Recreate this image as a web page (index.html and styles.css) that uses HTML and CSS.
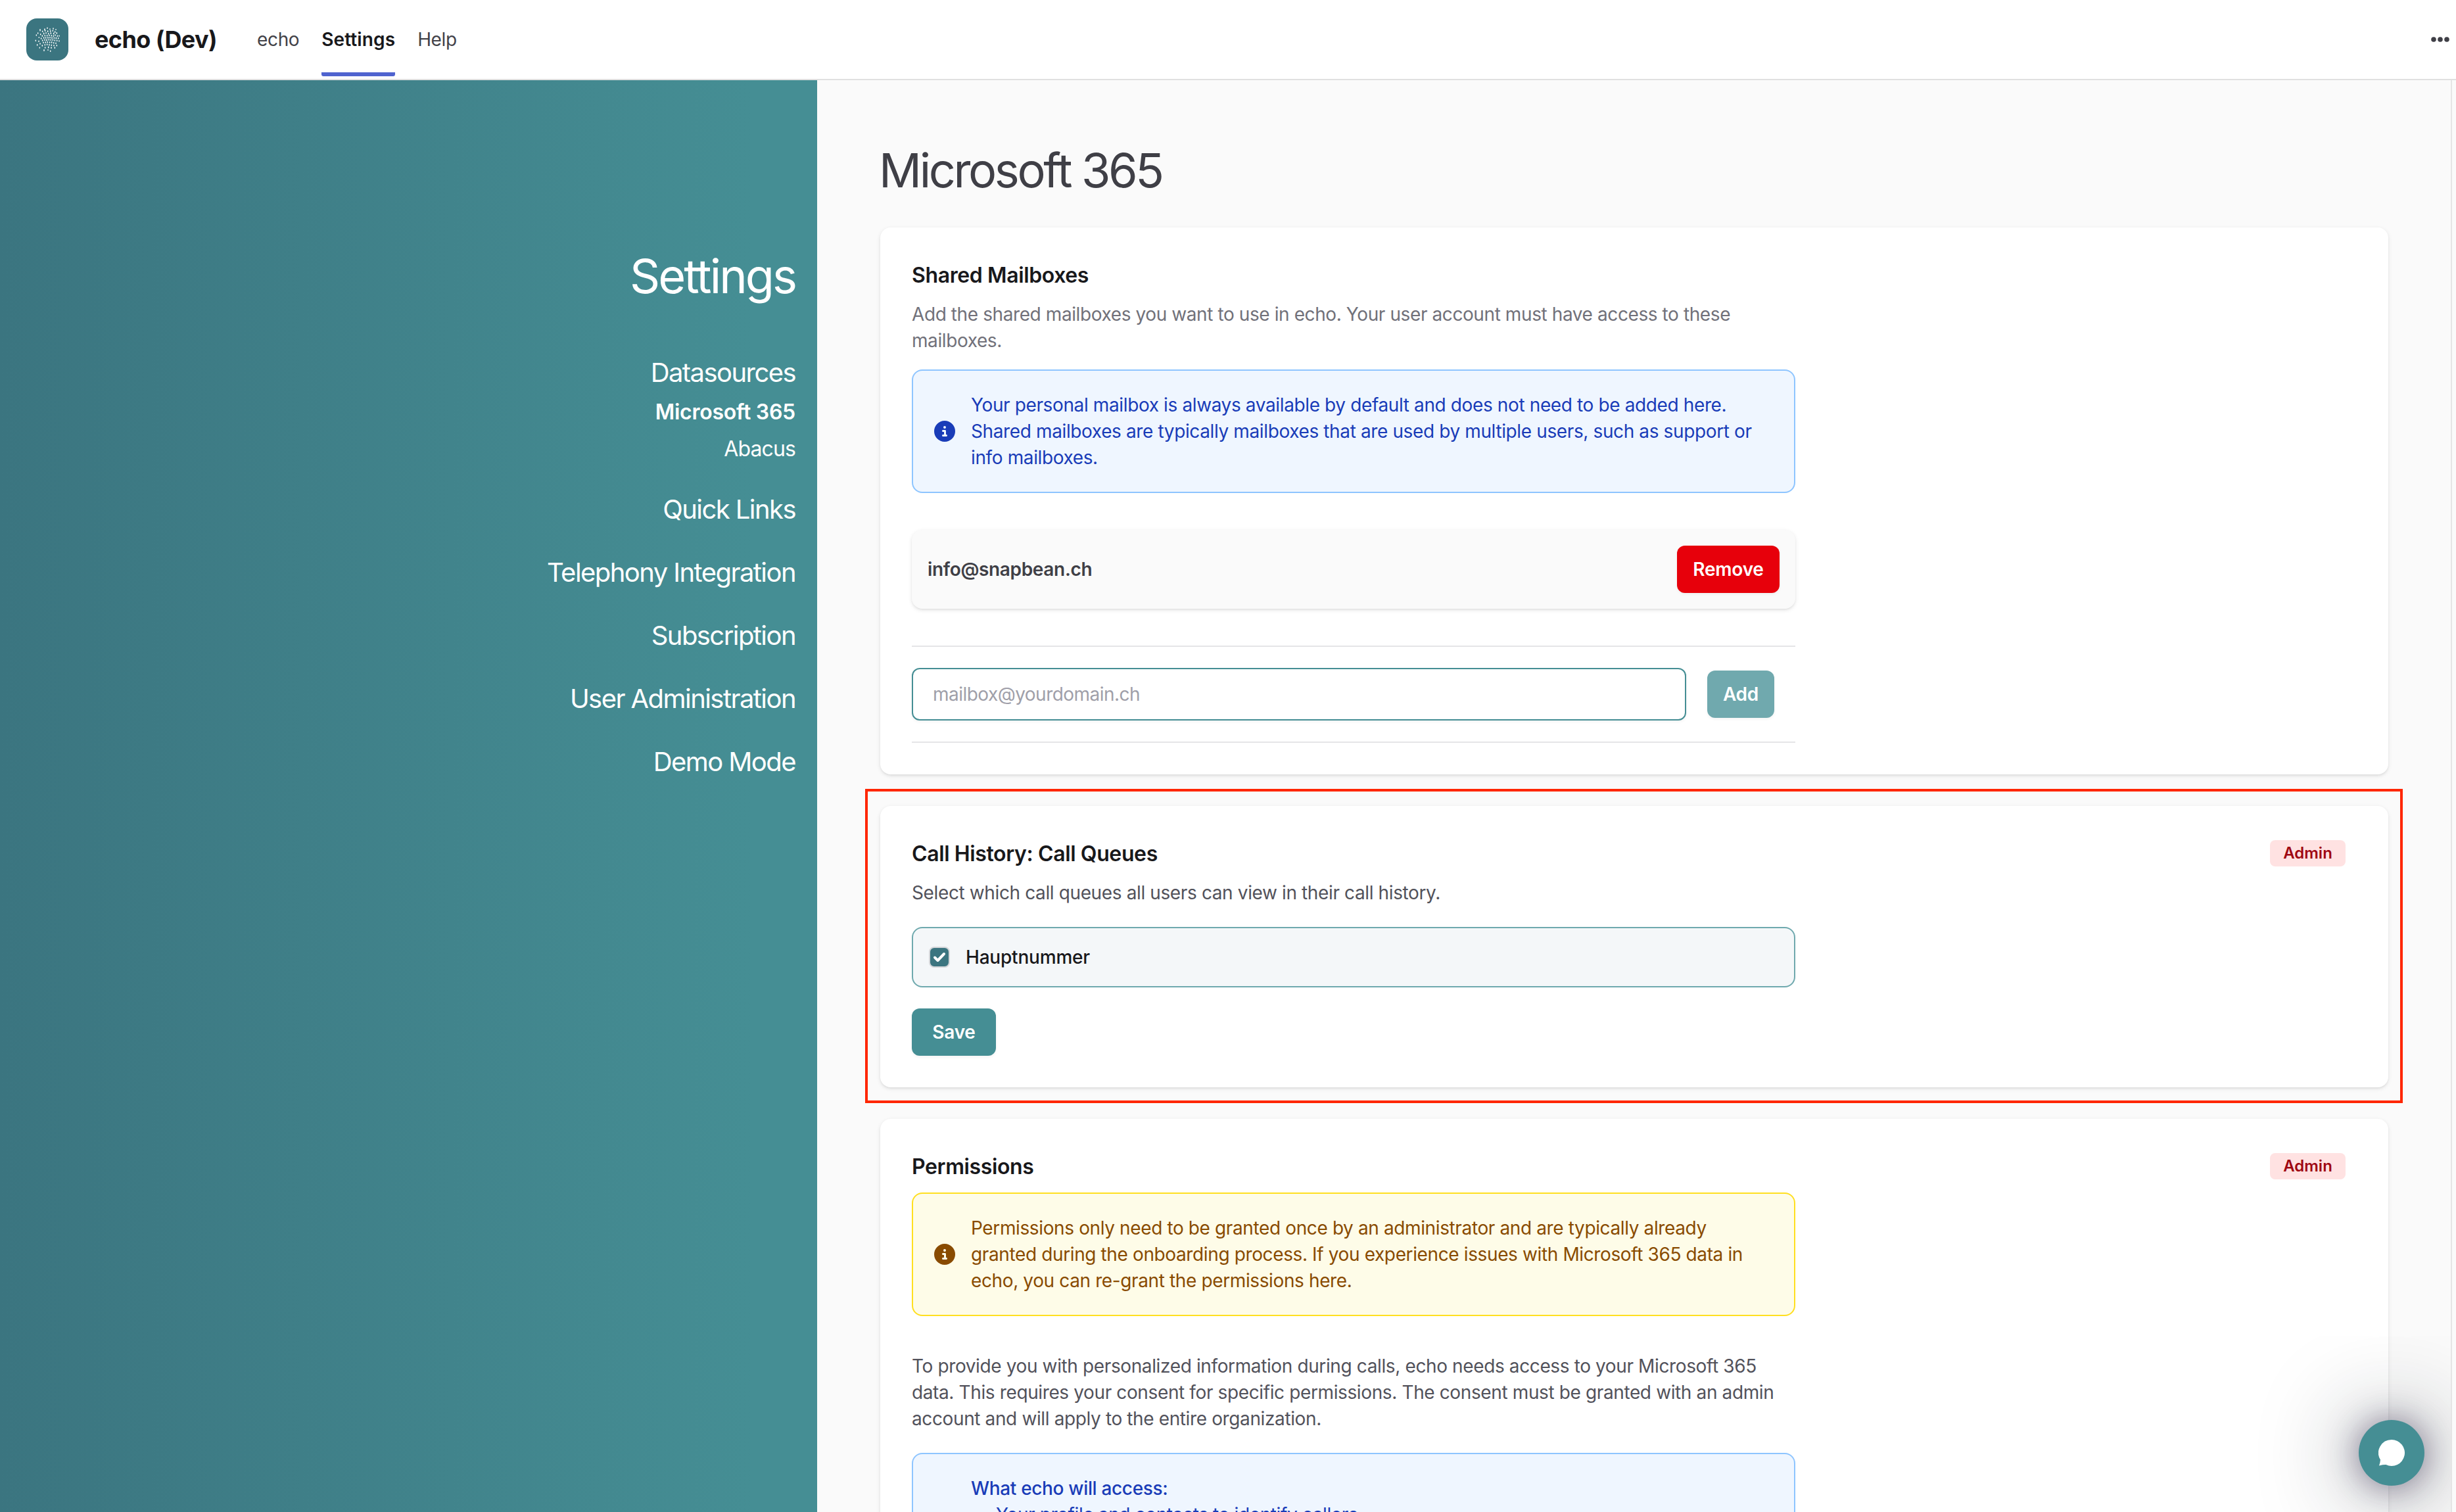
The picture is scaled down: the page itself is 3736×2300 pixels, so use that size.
FILE: index.html
```
<!DOCTYPE html>
<html lang="en">
<head>
  <meta charset="UTF-8" />
  <meta name="viewport" content="width=device-width, initial-scale=1.0"/>
  <title>echo (Dev) | Settings</title>
  <link rel="stylesheet" href="styles.css">
</head>
<body>
  <header>
    <svg class="logo" viewBox="24 24 192 192">
      <rect x="24" y="24" width="192" height="192" rx="48" fill="#3b7580"/>
      <path class="dots" d="M120 67v3M108 72v5M132 72v2M147 69v3M159 74v2M87 74v6M98 82v3M110 79v3M122 81v4M134 80v4M145 79v3M155 84v4M77 90v3M89 95v3M104 91v4M114 89v3M125 92v3M136 90v4M149 91v4M163 89v4M70 99v3M82 110v2M97 102v4M109 101v3M119 101v3M129 100v3M139 101v3M148 103v3M156 99v3M166 103v3M174 103v2M92 114v3M104 111v4M113 111v3M123 110v4M132 110v3M141 111v4M151 112v3M160 112v4M170 113v3M67 124v3M81 127v3M98 123v3M108 121v3M117 121v4M127 120v3M136 121v3M145 121v3M154 123v3M164 124v3M174 126v2M74 143v4M87 138v3M102 133v3M112 132v3M121 131v3M131 132v3M140 131v4M149 134v3M159 136v3M97 146v4M109 143v3M119 142v3M129 143v3M139 145v3M150 146v3M163 146v3M85 157v2M110 156v3M125 154v4M138 156v4M154 156v4M105 167v5M123 167v2M134 172v3"/>
    </svg>
    <div class="brand">echo (Dev)</div>
    <nav>
      <a href="#">echo</a>
      <a href="#" class="active">Settings</a>
      <a href="#">Help</a>
    </nav>
    <svg class="more" viewBox="0 0 28 8">
      <circle cx="4" cy="4" r="3.8"/><circle cx="14" cy="4" r="3.8"/><circle cx="24" cy="4" r="3.8"/>
    </svg>
  </header>

  <div class="layout">
    <aside>
      <h2>Settings</h2>
      <ul class="menu">
        <li>
          <a href="#">Datasources</a>
          <ul class="submenu">
            <li><a href="#" class="current">Microsoft 365</a></li>
            <li><a href="#">Abacus</a></li>
          </ul>
        </li>
        <li><a href="#">Quick Links</a></li>
        <li><a href="#">Telephony Integration</a></li>
        <li><a href="#">Subscription</a></li>
        <li><a href="#">User Administration</a></li>
        <li><a href="#">Demo Mode</a></li>
      </ul>
    </aside>

    <main>
      <h1>Microsoft 365</h1>

      <section class="card">
        <div class="card-head"><h3>Shared Mailboxes</h3></div>
        <div class="card-body">
          <p class="muted">Add the shared mailboxes you want to use in echo. Your user account must have access to these<br>mailboxes.</p>
          <div class="alert info">
            <svg class="alert-icon" viewBox="0 0 512 512"><path d="M256 512a256 256 0 1 0 0-512 256 256 0 1 0 0 512zM216 336h24v-64h-24c-13.300 0-24-10.700-24-24s10.700-24 24-24h48c13.300 0 24 10.700 24 24v88h8c13.300 0 24 10.700 24 24s-10.700 24-24 24h-80c-13.300 0-24-10.700-24-24s10.700-24 24-24zm40-208a32 32 0 1 1 0 64 32 32 0 1 1 0-64z"/></svg>
            <p>Your personal mailbox is always available by default and does not need to be added here.<br>Shared mailboxes are typically mailboxes that are used by multiple users, such as support or<br>info mailboxes.</p>
          </div>
          <div class="mailbox">
            <span>info@snapbean.ch</span>
            <button class="btn btn-remove">Remove</button>
          </div>
          <hr>
          <form class="add-form">
            <input type="text" placeholder="mailbox@yourdomain.ch">
            <button type="button" class="btn btn-add">Add</button>
          </form>
          <hr>
        </div>
      </section>

      <section class="card highlighted">
        <div class="card-head"><h3>Call History: Call Queues</h3><span class="badge">Admin</span></div>
        <div class="card-body">
          <p>Select which call queues all users can view in their call history.</p>
          <label class="queue">
            <svg class="check" viewBox="0 0 32 32">
              <rect x="1" y="1" width="30" height="30" rx="7" fill="#3b7580" stroke="#d4d7da" stroke-width="2"/>
              <path d="M9 16.500l4.500 4.500 9.500-10" fill="none" stroke="#fff" stroke-width="4" stroke-linecap="round" stroke-linejoin="round"/>
            </svg>
            Hauptnummer
          </label>
          <button class="btn btn-save">Save</button>
        </div>
      </section>

      <section class="card">
        <div class="card-head"><h3>Permissions</h3><span class="badge">Admin</span></div>
        <div class="card-body">
          <div class="alert warning">
            <svg class="alert-icon" viewBox="0 0 512 512"><path d="M256 512a256 256 0 1 0 0-512 256 256 0 1 0 0 512zM216 336h24v-64h-24c-13.300 0-24-10.700-24-24s10.700-24 24-24h48c13.300 0 24 10.700 24 24v88h8c13.300 0 24 10.700 24 24s-10.700 24-24 24h-80c-13.300 0-24-10.700-24-24s10.700-24 24-24zm40-208a32 32 0 1 1 0 64 32 32 0 1 1 0-64z"/></svg>
            <p>Permissions only need to be granted once by an administrator and are typically already<br>granted during the onboarding process. If you experience issues with Microsoft 365 data in<br>echo, you can re-grant the permissions here.</p>
          </div>
          <p class="consent">To provide you with personalized information during calls, echo needs access to your Microsoft 365<br>data. This requires your consent for specific permissions. The consent must be granted with an admin<br>account and will apply to the entire organization.</p>
          <div class="alert info access">
            <div>
              <strong>What echo will access:</strong>
              <ul>
                <li>Your profile and contacts to identify callers</li>
              </ul>
            </div>
          </div>
        </div>
      </section>

      <button class="chat" aria-label="Chat">
        <svg viewBox="0 0 40 40"><path d="M20 0a20 20 0 1 1-8.500 38.100Q7 38 1 39.500q1.800-5 2-9A20 20 0 0 1 20 0z" fill="#fff"/></svg>
      </button>
    </main>
  </div>
</body>
</html>
```
FILE: styles.css
```
* {
  box-sizing: border-box;
  margin: 0;
  padding: 0;
}
body {
  height: 2300px;
  overflow: hidden;
  background: #fafafa;
  font-family: Inter, "Liberation Sans", sans-serif;
  font-size: 28px;
  line-height: 40px;
  letter-spacing: -0.0135em;
  color: #52525b;
}
a {
  color: inherit;
  text-decoration: none;
}
ul {
  list-style: none;
}

/* top bar */
header {
  height: 122px;
  background: #fff;
  border-bottom: 2px solid #e0e0e0;
  display: flex;
  align-items: center;
  padding: 0 10px 0 40px;
}
.logo {
  width: 64px;
  height: 64px;
}
.dots {
  fill: none;
  stroke: #fff;
  stroke-width: 4.5;
  stroke-linecap: round;
}
.brand {
  margin-left: 40px;
  font-size: 36px;
  font-weight: 700;
  letter-spacing: -0.016em;
  color: #18181b;
}
nav {
  display: flex;
  gap: 34px;
  height: 120px;
  margin-left: 61px;
}
nav a {
  height: 116px;
  line-height: 120px;
  color: #424248;
}
nav .active {
  font-weight: 600;
  letter-spacing: 0.004em;
  color: #18181b;
  border-bottom: 6px solid #4f63cf;
  border-radius: 3px;
}
.more {
  width: 28px;
  height: 8px;
  margin-left: auto;
  fill: #3f3f46;
}

.layout {
  display: flex;
  height: 2178px;
}

/* sidebar */
aside {
  width: 1243px;
  flex: none;
  padding: 258px 33px 0 0;
  text-align: right;
  color: #fff;
  background: linear-gradient(90deg, #3b7580, #458e94 92%);
}
aside h2 {
  font-size: 72px;
  line-height: 80px;
  font-weight: 400;
  letter-spacing: -0.041em;
  margin-bottom: 79px;
}
.menu {
  display: flex;
  flex-direction: column;
  gap: 40px;
  font-size: 40px;
  line-height: 56px;
  letter-spacing: -0.039em;
}
.menu a {
  display: block;
}
.submenu {
  display: flex;
  flex-direction: column;
  gap: 8px;
  margin-top: 8px;
  font-size: 32px;
  line-height: 48px;
  letter-spacing: -0.028em;
}
.submenu .current {
  font-weight: 600;
  letter-spacing: -0.008em;
}

/* content */
main {
  position: relative;
  flex: none;
  width: 2487px;
  padding: 97px 95px 0 96px;
  border-right: 2px solid #e5e5e5;
  overflow: hidden;
}
h1 {
  margin-left: -2px;
  font-size: 72px;
  line-height: 80px;
  font-weight: 400;
  letter-spacing: -0.047em;
  color: #3f3f46;
}
.card {
  position: relative;
  margin-top: 48px;
  padding: 48px;
  background: #fff;
  border-radius: 16px;
  box-shadow: 0 2px 6px rgba(0, 0, 0, 0.1), 0 2px 4px -2px rgba(0, 0, 0, 0.1);
}
h1 + .card {
  margin-top: 47px;
}
/* red frame around the call queue card */
.highlighted::after {
  content: "";
  position: absolute;
  inset: -26px -22px -24px -23px;
  border: 4px solid #ff2600;
}
.card-head {
  display: flex;
  justify-content: space-between;
  align-items: center;
  height: 48px;
  margin-bottom: 16px;
  padding-right: 17px;
}
h3 {
  padding-top: 1px;
  font-size: 32px;
  line-height: 48px;
  font-weight: 600;
  letter-spacing: -0.012em;
  color: #18181b;
}
.badge {
  width: 115px;
  text-align: center;
  font-size: 24px;
  font-weight: 600;
  letter-spacing: 0;
  color: #9f0712;
  background: #ffe2e2;
  border-radius: 8px;
}
.card-body {
  width: 1344px;
  white-space: nowrap;
}
.muted {
  color: #71717a;
  letter-spacing: -0.0145em;
}
.alert {
  display: flex;
  align-items: center;
  gap: 24px;
  padding: 32px;
  border: 2px solid;
  border-radius: 16px;
}
.alert-icon {
  width: 32px;
  height: 32px;
  fill: currentColor;
}
.info {
  margin-top: 24px;
  color: #193cb8;
  background: #eff6ff;
  border-color: #8ec5ff;
}
.warning {
  color: #894b00;
  background: #fefce8;
  border-color: #ffdf20;
}
.mailbox {
  display: flex;
  justify-content: space-between;
  align-items: center;
  height: 120px;
  margin: 56px 0;
  padding: 0 24px;
  background: #fafafa;
  border-radius: 16px;
  box-shadow: 0 2px 6px rgba(0, 0, 0, 0.1), 0 2px 4px -2px rgba(0, 0, 0, 0.1);
  font-weight: 600;
  letter-spacing: -0.012em;
  color: #3f3f46;
}
.btn {
  height: 72px;
  border: none;
  border-radius: 12px;
  font: 600 28px/40px Inter, "Liberation Sans", sans-serif;
  letter-spacing: -0.008em;
  color: #fff;
  box-shadow: 0 2px 4px rgba(0, 0, 0, 0.05);
}
.btn-remove {
  width: 156px;
  background: #e7000b;
}
.btn-add {
  width: 102px;
  background: #70a9ae;
}
.btn-save {
  width: 128px;
  background: #458e94;
}
hr {
  border: none;
  height: 2px;
  background: #e5e5e7;
}
.add-form {
  display: flex;
  align-items: center;
  gap: 32px;
  margin: 32px 0;
}
.add-form input {
  width: 1178px;
  height: 80px;
  padding: 0 30px;
  border: 2px solid #458e94;
  border-radius: 12px;
  font: 28px Inter, "Liberation Sans", sans-serif;
  letter-spacing: -0.019em;
  box-shadow: 0 2px 4px rgba(0, 0, 0, 0.05);
}
.add-form input::placeholder {
  color: #9f9fa9;
}
.queue {
  display: flex;
  align-items: center;
  gap: 24px;
  height: 92px;
  margin: 32px 0;
  padding: 0 24px;
  border: 2px solid #6fa9ae;
  border-radius: 16px;
  background: #f4f7f9;
  font-weight: 500;
  letter-spacing: -0.007em;
  color: #18181b;
}
.check {
  width: 32px;
  height: 32px;
}
.consent {
  margin: 56px 0 32px;
}
.access {
  margin-top: 0;
  padding: 32px 32px 32px 88px;
}
.access strong {
  display: block;
  font-weight: 500;
  letter-spacing: -0.012em;
}
.access ul {
  padding-left: 38px;
}

/* floating chat button */
.chat {
  position: absolute;
  right: 40px;
  bottom: 40px;
  width: 100px;
  height: 100px;
  border: none;
  border-radius: 50%;
  background: #458e94;
  display: flex;
  align-items: center;
  justify-content: center;
  box-shadow: 0 2px 50px rgba(30, 20, 60, 0.5), 0 4px 140px 14px rgba(20, 30, 40, 0.38);
}
.chat svg {
  width: 40px;
  height: 40px;
}
```
